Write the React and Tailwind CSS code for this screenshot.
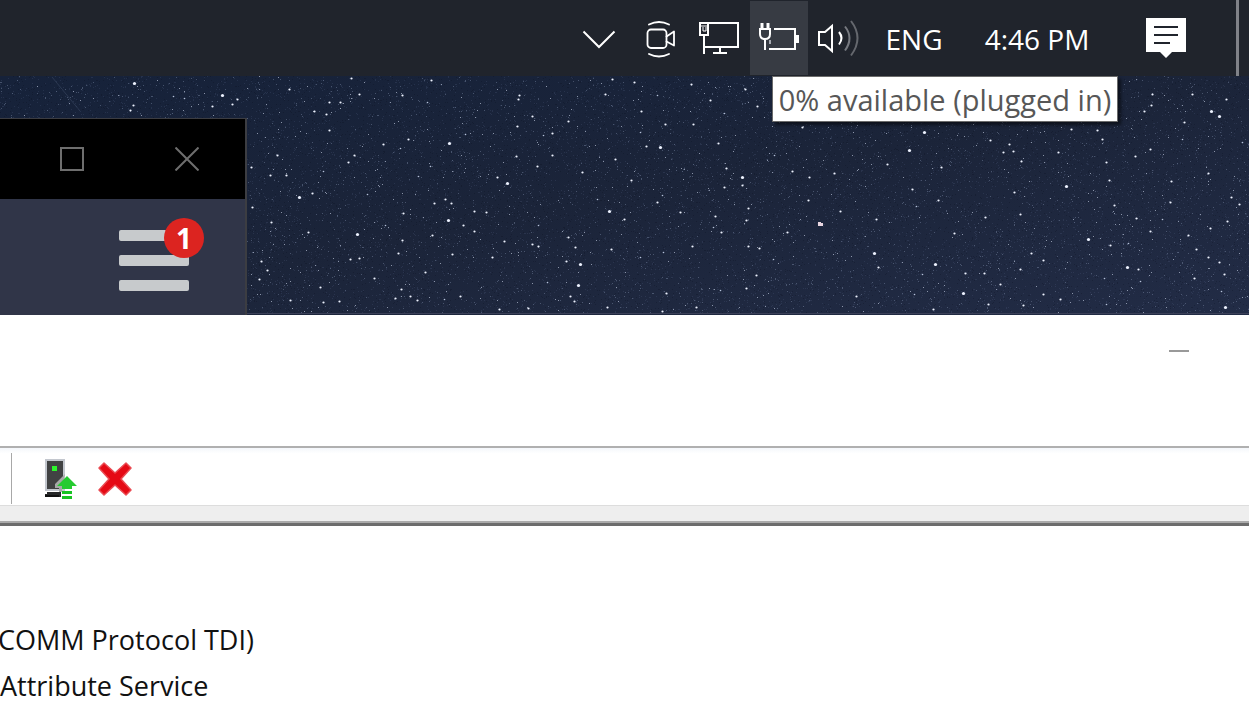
import React from 'react';

// Bright stars on the wallpaper: x, y, size (1 faint, 2 normal, 3 big)
const stars = [
    [351, 2, 2], [289, 13, 2], [359, 18, 2], [329, 26, 2], [340, 26, 2], [314, 35, 2], [326, 38, 2], [329, 54, 2],
    [431, 4, 2], [402, 19, 2], [427, 26, 1], [519, 19, 2], [518, 23, 2], [612, 3, 2], [605, 18, 2], [532, 40, 2],
    [517, 50, 2], [568, 45, 2], [552, 57, 2], [543, 59, 1], [449, 67, 3], [408, 63, 2], [383, 68, 2], [400, 72, 1],
    [465, 58, 1], [277, 79, 2], [354, 79, 2], [348, 86, 2], [251, 91, 2], [270, 99, 2], [286, 99, 2], [323, 95, 1],
    [430, 90, 1], [418, 100, 1], [516, 80, 2], [552, 79, 2], [615, 83, 2], [497, 101, 2], [507, 107, 3], [537, 90, 2],
    [582, 96, 2], [631, 104, 2], [299, 121, 3], [312, 117, 2], [367, 118, 1], [252, 131, 2], [445, 123, 2], [434, 127, 2],
    [451, 127, 2], [403, 137, 2], [474, 135, 2], [486, 136, 2], [597, 123, 1], [609, 135, 3], [624, 143, 2], [448, 144, 3],
    [463, 149, 2], [474, 155, 2], [432, 159, 2], [385, 149, 1], [357, 158, 3], [308, 156, 2], [271, 146, 2], [504, 165, 2],
    [538, 149, 1], [532, 168, 2], [538, 170, 2], [568, 161, 2], [575, 171, 2], [492, 181, 2], [566, 185, 2], [580, 188, 3],
    [398, 177, 2], [402, 164, 2], [350, 183, 2], [359, 182, 2], [261, 185, 2], [267, 194, 2], [259, 203, 2], [374, 202, 2],
    [425, 196, 2], [452, 178, 2], [320, 211, 2], [401, 213, 2], [395, 222, 2], [410, 220, 2], [417, 224, 2], [339, 225, 2],
    [323, 226, 2], [290, 224, 2], [460, 220, 2], [444, 223, 1], [499, 233, 2], [528, 232, 2], [547, 206, 1], [578, 209, 3],
    [570, 220, 2], [574, 225, 2], [607, 231, 2], [611, 173, 2], [691, 8, 2], [634, 6, 2], [657, 19, 1], [710, 24, 2],
    [641, 35, 2], [757, 30, 2], [745, 13, 2], [724, 37, 1], [693, 48, 2], [665, 48, 2], [640, 56, 1], [646, 70, 2],
    [660, 71, 3], [718, 67, 2], [742, 101, 3], [742, 109, 2], [724, 111, 2], [726, 92, 2], [802, 51, 2], [792, 95, 2],
    [809, 101, 2], [834, 97, 2], [774, 79, 1], [657, 126, 2], [662, 119, 1], [680, 136, 2], [715, 140, 2], [748, 132, 2],
    [746, 144, 2], [713, 151, 1], [721, 156, 2], [748, 170, 2], [759, 172, 2], [692, 170, 2], [787, 156, 2], [773, 183, 1],
    [756, 199, 2], [808, 124, 2], [840, 135, 2], [640, 181, 1], [663, 176, 1], [666, 217, 2], [696, 231, 2], [662, 235, 2],
    [746, 212, 2], [720, 214, 1], [924, 56, 3], [909, 74, 3], [990, 64, 2], [1009, 68, 2], [1003, 76, 2], [1013, 75, 2],
    [1021, 85, 2], [1058, 76, 2], [1102, 63, 2], [1106, 86, 2], [1150, 73, 2], [1135, 80, 2], [1182, 63, 1], [1242, 66, 1],
    [887, 88, 2], [941, 91, 2], [912, 113, 2], [938, 124, 2], [1014, 116, 2], [1066, 110, 3], [1020, 138, 2], [985, 141, 2],
    [916, 130, 1], [876, 143, 2], [954, 157, 2], [1088, 163, 3], [1109, 104, 2], [1114, 129, 2], [1171, 105, 2], [1208, 97, 2],
    [1239, 128, 2], [1231, 121, 2], [1170, 126, 2], [1162, 143, 1], [1136, 142, 2], [1227, 145, 2], [1210, 152, 2], [1188, 159, 2],
    [1150, 155, 2], [1196, 173, 2], [1208, 181, 2], [1128, 167, 1], [1110, 169, 2], [874, 177, 3], [935, 188, 3], [1031, 177, 2],
    [1043, 184, 2], [1020, 193, 2], [1127, 191, 3], [1138, 193, 2], [1104, 202, 1], [984, 197, 2], [965, 197, 2], [878, 191, 2],
    [922, 198, 1], [1000, 208, 2], [963, 217, 3], [1043, 218, 2], [1023, 229, 2], [988, 228, 2], [1060, 223, 2], [933, 233, 2],
    [914, 218, 1], [856, 220, 2], [1225, 231, 3], [1221, 215, 1], [1224, 198, 2], [1194, 202, 2], [1219, 186, 2], [1106, 228, 1],
    [1140, 205, 1], [1152, 18, 2], [1192, 18, 2], [1226, 23, 2], [1211, 35, 3], [1219, 40, 3], [1151, 29, 2], [1144, 35, 2],
    [1184, 46, 2], [1071, 53, 2], [1097, 54, 2], [134, 7, 3], [133, 29, 2], [130, 34, 2], [222, 19, 3], [237, 23, 2],
    [232, 28, 2], [212, 30, 2], [184, 22, 1], [173, 20, 1],
];

// Fixed seed so the dust looks the same on every render
function makeDust(count, seed) {
    let s = seed;
    const next = () => {
        s = (s * 16807) % 2147483647;
        return s / 2147483647;
    };
    let d = '';
    for (let i = 0; i < count; i++) {
        d += `M${Math.floor(next() * 1249)} ${Math.floor(next() * 238)}h1v1h-1z`;
    }
    return d;
}

const dust = [
    { d: makeDust(11000, 11), fill: '#5a6a8c', opacity: 0.22 },
    { d: makeDust(9000, 97), fill: '#060c1c', opacity: 0.25 },
    { d: makeDust(2600, 23), fill: '#8b9ab8', opacity: 0.4 },
    { d: makeDust(650, 51), fill: '#c6d0e4', opacity: 0.65 },
];

function Wallpaper() {
    return (
        <svg className="absolute inset-0 w-full h-full" viewBox="0 0 1249 239" preserveAspectRatio="xMinYMin slice" aria-hidden="true">
            <defs>
                <linearGradient id="sky" x1="0" y1="0" x2="1" y2="1">
                    <stop offset="0" stopColor="#16223a" />
                    <stop offset="0.5" stopColor="#1b2439" />
                    <stop offset="1" stopColor="#222c46" />
                </linearGradient>
            </defs>
            <rect width="1249" height="239" fill="url(#sky)" />
            {dust.map((layer, i) => (
                <path key={i} d={layer.d} fill={layer.fill} opacity={layer.opacity} shapeRendering="crispEdges" />
            ))}
            {stars.map(([x, y, size], i) => (
                <circle key={i} cx={x + 0.5} cy={y + 0.5} r={size === 3 ? 1.6 : size === 2 ? 1.1 : 0.8} fill={size === 1 ? '#b6c2da' : '#eef3ff'} />
            ))}
            <path d="M818 146h3v1h2v3h-5z" fill="#e9d6e0" />
            <path d="M52 1L80 35" stroke="#3a4863" strokeWidth="1" opacity="0.6" />
            <rect y="237" width="1249" height="1" fill="#3b4058" />
        </svg>
    );
}

function ChevronIcon() {
    return (
        <svg width="34" height="20" viewBox="0 0 34 20" fill="none" stroke="#fff" strokeWidth="2">
            <path d="M1.5 1.5L17 17L32.5 1.5" />
        </svg>
    );
}

function MeetNowIcon() {
    return (
        <svg width="30" height="38" viewBox="0 0 30 38" fill="none" stroke="#fff" strokeWidth="1.8" strokeLinecap="round" strokeLinejoin="round">
            <rect x="1.5" y="9.5" width="19" height="18.5" rx="3.5" />
            <path d="M20.5 16.5L28 11.5V25.5L20.5 21.5" />
            <path d="M3 4.5Q13 -0.5 23 4.5M3 34Q13 39 23 34" />
        </svg>
    );
}

function NetworkIcon() {
    return (
        <svg width="42" height="34" viewBox="0 0 42 34" fill="none" stroke="#fff" strokeWidth="2">
            <path d="M10 2H39V26H6" />
            <path d="M21 26V32M14 32H28" />
            <path d="M1 2H9V14H1ZM5 14V33" />
            <path d="M2 5H8M4 6V10H7V6" strokeWidth="1" />
        </svg>
    );
}

function BatteryIcon() {
    return (
        <svg width="42" height="30" viewBox="0 0 42 30" fill="none" stroke="#fff" strokeWidth="2">
            <path d="M16 6H37V26H11" />
            <path d="M38 12H41V20H38Z" fill="#fff" stroke="none" />
            <path d="M4 0V6M10 0V6" strokeWidth="3" />
            <path d="M2 5V11Q2 16 7 16Q12 16 12 11V5M1 6H13M7 16V27" />
            <path d="M12 17V21" stroke="#a8abb2" />
        </svg>
    );
}

function VolumeIcon() {
    return (
        <svg width="42" height="38" viewBox="0 0 42 38" fill="none" stroke="#fff" strokeWidth="2">
            <path d="M2 13H8L15 7V32L8 26H2Z" />
            <path d="M22 13Q27 19 22 25.5" />
            <path d="M28 7.5Q37 19 28 31.5" stroke="#777a80" />
            <path d="M34 2Q47 19 34 36.5" stroke="#65686e" />
        </svg>
    );
}

function ActionCenterIcon() {
    return (
        <svg width="40" height="40" viewBox="0 0 40 40">
            <path d="M0 0H40V34H26L20 40L14 34H0Z" fill="#fff" />
            <path d="M8 9H32M8 17H32M8 25H24" stroke="#20242c" strokeWidth="2" />
        </svg>
    );
}

function TrayButton({ label, className, children }) {
    return (
        <button type="button" aria-label={label} className={`flex h-full items-center justify-center ${className}`}>
            {children}
        </button>
    );
}

function Taskbar() {
    return (
        <header className="relative z-10 flex h-[76px] shrink-0 justify-end bg-[#20242c] pr-[10px] text-[28px] leading-10 text-white">
            <TrayButton label="Show hidden icons" className="w-[66px] pt-1"><ChevronIcon /></TrayButton>
            <TrayButton label="Meet now" className="w-[58px] pt-0.5"><MeetNowIcon /></TrayButton>
            <TrayButton label="Network" className="w-[60px]"><NetworkIcon /></TrayButton>
            <div className="relative w-[58px] pt-px pb-px">
                <TrayButton label="Battery" className="w-full bg-[#373b43]"><BatteryIcon /></TrayButton>
                <div role="tooltip" className="absolute left-[22px] top-[76px] flex h-[46px] w-[346px] items-center justify-center whitespace-nowrap border border-[#6b6b6b] bg-white pt-0.5 text-[29px] text-[#575757] shadow-[3px_3px_3px_rgba(0,0,0,0.5)]">
                    0% available (plugged in)
                </div>
            </div>
            <TrayButton label="Volume" className="w-[60px]"><VolumeIcon /></TrayButton>
            <button type="button" className="w-[92px] pt-0.5">ENG</button>
            <button type="button" className="w-[154px] pt-0.5">4:46 PM</button>
            <TrayButton label="Notifications" className="mr-[18px] w-[104px]"><ActionCenterIcon /></TrayButton>
            <div className="w-[3px] bg-[#808288]"></div>
        </header>
    );
}

function DarkWindow() {
    return (
        <div className="relative w-[247px] border-t border-r-2 border-[#3c3d42] bg-[#303548]">
            <div className="flex h-20 items-center justify-end bg-black">
                <button type="button" aria-label="Maximize" className="flex h-full w-[115px] items-center justify-center">
                    <svg width="24" height="24" viewBox="0 0 24 24" fill="none" stroke="#6e6e6e" strokeWidth="2">
                        <rect x="1" y="1" width="22" height="22" />
                    </svg>
                </button>
                <button type="button" aria-label="Close" className="flex h-full w-[116px] items-center justify-center">
                    <svg width="24" height="24" viewBox="0 0 24 24" fill="none" stroke="#6e6e6e" strokeWidth="2">
                        <path d="M0.5 0.5L23.5 23.5M23.5 0.5L0.5 23.5" />
                    </svg>
                </button>
            </div>
            <div className="flex h-[116px] justify-end pt-[31px] pr-[56px]">
                <button type="button" aria-label="Menu" className="relative flex h-[61px] w-[70px] flex-col justify-between">
                    <span className="h-[11px] w-full rounded-xs bg-[#c7cacc]"></span>
                    <span className="h-[11px] w-full rounded-xs bg-[#c7cacc]"></span>
                    <span className="h-[11px] w-full rounded-xs bg-[#c7cacc]"></span>
                    <span className="absolute -top-3 left-[45px] flex size-10 items-center justify-center rounded-full bg-[#dc2420] text-[28px] leading-10 font-bold text-white">1</span>
                </button>
            </div>
        </div>
    );
}

function UpdateDriverIcon() {
    return (
        <svg width="34" height="42" viewBox="0 0 34 42">
            <path d="M1 1H21V33H1Z" fill="#c3c7ce" />
            <path d="M3 3H19V31H3Z" fill="#414243" />
            <path d="M8 8H13V13H8Z" fill="#2cf52c" />
            <path d="M3 34H17V39H1V36H3Z" fill="#262728" />
            <path d="M1 37H15V39H1Z" fill="#111" />
            <path d="M21 16L11 26V30H15V34H18V30Z" fill="#a7a9a8" />
            <path d="M23 18L33 28H28V31H18V28H13Z" fill="#25cb30" />
            <path d="M18 33H28V36H18ZM18 38H28V41H18Z" fill="#18c322" />
        </svg>
    );
}

function RemoveIcon() {
    return (
        <svg width="34" height="34" viewBox="0 0 34 34">
            <path d="M6 1L17 11L28 1L33 6L23 17L33 28L28 33L17 23L6 33L1 28L11 17L1 6Z" fill="#e50914" stroke="#ea4a52" strokeWidth="1.5" strokeLinejoin="round" />
        </svg>
    );
}

function DeviceManager() {
    return (
        <main className="shrink-0 grow bg-white">
            <div className="flex h-[131px] justify-end pr-[43px]">
                <button type="button" aria-label="Minimize" className="flex h-[72px] w-[54px] items-center justify-center">
                    <span className="h-0.5 w-5 bg-[#999]"></span>
                </button>
            </div>
            <div className="flex h-[59px] items-center border-t-2 border-[#b0b0b0] bg-linear-to-b from-[#f4f7fb] to-white to-10% pl-[11px]">
                <div className="mt-1 h-[51px] w-px bg-[#a8a8a8]"></div>
                <button type="button" aria-label="Update device driver" className="ml-8 pt-1"><UpdateDriverIcon /></button>
                <button type="button" aria-label="Uninstall device" className="ml-5 pt-1"><RemoveIcon /></button>
            </div>
            <div className="h-[21px] border-t border-b-[3px] border-t-[#ddd] border-b-[#6c6c6c] bg-[#eee] shadow-[inset_0_-2px_0_#aaa]"></div>
            <ul className="pt-[91px] text-[27px] leading-[46px] whitespace-nowrap text-[#111]">
                <li className="-ml-0.5">COMM Protocol TDI)</li>
                <li>Attribute Service</li>
            </ul>
        </main>
    );
}

export default function App() {
    return (
        <div className="flex h-screen flex-col overflow-hidden bg-white font-['Open_Sans','Noto_Sans',sans-serif]">
            <Taskbar />
            <section className="relative h-[239px] shrink-0 overflow-hidden pt-[42px]">
                <Wallpaper />
                <DarkWindow />
            </section>
            <DeviceManager />
        </div>
    );
}
